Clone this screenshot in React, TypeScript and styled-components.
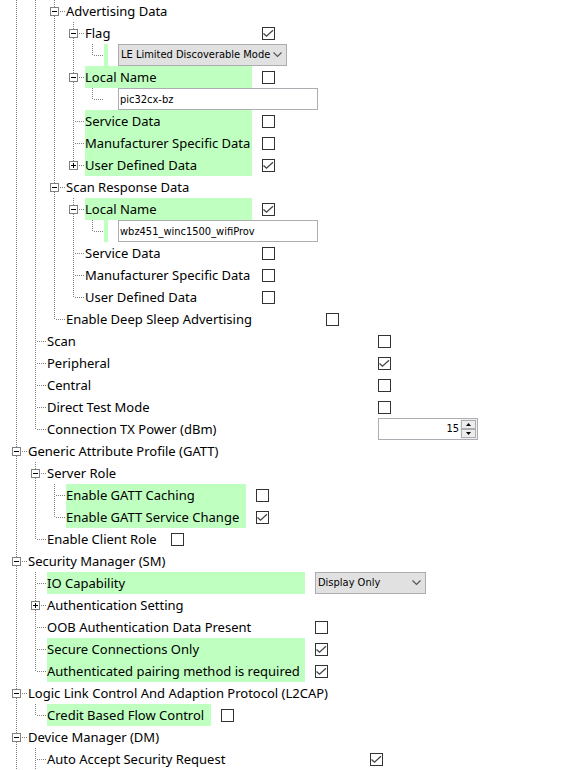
import React, { useState } from "react";
import styled, { createGlobalStyle, css } from "styled-components";

type Control =
  | { kind: "check"; checked?: boolean }
  | { kind: "select"; value: string; width: number }
  | { kind: "text"; value: string }
  | { kind: "number"; value: number };

interface TreeNode {
  label?: string;
  name?: string;
  changed?: boolean;
  control?: Control;
  collapsed?: boolean;
  more?: boolean;
  column?: number;
  children?: TreeNode[];
}

const on: Control = { kind: "check", checked: true };
const off: Control = { kind: "check" };

const profileTree: TreeNode[] = [
  {
    label: "Generic Attribute Profile (GATT)",
    column: 114,
    children: [
      {
        label: "Server Role",
        column: 180,
        children: [
          { label: "Enable GATT Caching", changed: true, control: off },
          { label: "Enable GATT Service Change", changed: true, control: on },
        ],
      },
      { label: "Enable Client Role", control: off },
    ],
  },
  {
    label: "Security Manager (SM)",
    column: 258,
    children: [
      { label: "IO Capability", changed: true, control: { kind: "select", value: "Display Only", width: 111 } },
      { label: "Authentication Setting", collapsed: true, children: [] },
      { label: "OOB Authentication Data Present", control: off },
      { label: "Secure Connections Only", changed: true, control: on },
      { label: "Authenticated pairing method is required", changed: true, control: on },
    ],
  },
  {
    label: "Logic Link Control And Adaption Protocol (L2CAP)",
    column: 164,
    children: [{ label: "Credit Based Flow Control", changed: true, control: off }],
  },
  {
    label: "Device Manager (DM)",
    more: true,
    column: 313,
    children: [{ label: "Auto Accept Security Request", more: true, control: on }],
  },
];

const gapTree: TreeNode[] = [
  {
    label: "Advertising Data",
    column: 167,
    children: [
      {
        label: "Flag",
        control: on,
        column: 4,
        children: [
          {
            name: "Discoverable mode",
            changed: true,
            control: { kind: "select", value: "LE Limited Discoverable Mode", width: 169 },
          },
        ],
      },
      {
        label: "Local Name",
        changed: true,
        control: off,
        column: 4,
        children: [{ name: "Advertised local name", control: { kind: "text", value: "pic32cx-bz" } }],
      },
      { label: "Service Data", changed: true, control: off },
      { label: "Manufacturer Specific Data", changed: true, control: off },
      { label: "User Defined Data", changed: true, control: on, collapsed: true, children: [] },
    ],
  },
  {
    label: "Scan Response Data",
    column: 167,
    children: [
      {
        label: "Local Name",
        changed: true,
        control: on,
        column: 4,
        children: [
          {
            name: "Scan response local name",
            changed: true,
            control: { kind: "text", value: "wbz451_winc1500_wifiProv" },
          },
        ],
      },
      { label: "Service Data", control: off },
      { label: "Manufacturer Specific Data", control: off },
      { label: "User Defined Data", control: off },
    ],
  },
  { label: "Enable Deep Sleep Advertising", control: off },
];

const roleTree: TreeNode[] = [
  { label: "Scan", control: off },
  { label: "Peripheral", control: on },
  { label: "Central", control: off },
  { label: "Direct Test Mode", control: off },
  { label: "Connection TX Power (dBm)", control: { kind: "number", value: 15 } },
];

const GlobalStyle = createGlobalStyle`
  * { box-sizing: border-box; }
  body { margin: 0; background: #fff; }
`;

const Page = styled.main`
  padding-left: 9px;
  overflow-x: hidden;
  color: #000;
  font: 13px/22px "Noto Sans", Verdana, sans-serif;
`;

const List = styled.ul`
  list-style: none;
  margin: 0;
  padding: 0;
`;

const Row = styled.div`
  display: flex;
  height: 22px;
  white-space: nowrap;
`;

type GuideShape = "line" | "blank" | "tee" | "end";

const vertical = "repeating-linear-gradient(to bottom, #808080 0 1px, transparent 1px 2px)";
const horizontal = "repeating-linear-gradient(to right, #808080 0 1px, transparent 1px 2px)";

const shapes = {
  blank: css``,
  line: css`
    background: ${vertical} 7px 0 / 1px 22px no-repeat;
  `,
  tee: css`
    background: ${vertical} 7px 0 / 1px 22px no-repeat, ${horizontal} 9px 11px / 9px 1px no-repeat;
  `,
  end: css`
    background: ${vertical} 7px 0 / 1px 12px no-repeat, ${horizontal} 9px 11px / 9px 1px no-repeat;
  `,
};

const Guide = styled.span<{ $shape: GuideShape }>`
  flex: none;
  width: 19px;
  height: 22px;
  padding: 7px 0 0 3px;
  ${(p) => shapes[p.$shape]}
`;

const Toggle = styled.button`
  display: block;
  width: 9px;
  height: 9px;
  padding: 0;
  border: 1px solid #808080;
  background: #fff;

  svg {
    display: block;
  }
`;

const Caption = styled.label<{ $changed?: boolean; $width?: number }>`
  flex: none;
  width: ${(p) => (p.$width ? `${p.$width}px` : "auto")};
  margin-right: 10px;
  background: ${(p) => (p.$changed ? "#bfffbf" : "transparent")};
`;

const TickBox = styled.span`
  display: grid;
  width: 13px;
  height: 13px;
  margin-top: 5px;

  > * {
    grid-area: 1 / 1;
  }
  svg {
    pointer-events: none;
    visibility: hidden;
  }
  input:checked + svg {
    visibility: visible;
  }
`;

const Tick = styled.input`
  appearance: none;
  width: 13px;
  height: 13px;
  margin: 0;
  border: 1px solid #333;
  background: #fff;
`;

const field = css`
  height: 22px;
  margin: 0;
  border: 1px solid #abadb3;
  border-radius: 0;
  color: #000;
  font: 11px/20px "DejaVu Sans Condensed", Tahoma, sans-serif;
`;

const SelectBox = styled.span<{ $width: number }>`
  display: grid;
  width: ${(p) => p.$width}px;
  align-items: center;

  > * {
    grid-area: 1 / 1;
  }
  svg {
    justify-self: end;
    margin-right: 5px;
    pointer-events: none;
  }
`;

const Select = styled.select`
  ${field}
  appearance: none;
  width: 100%;
  padding: 0 0 0 2px;
  background: #e1e1e1;
`;

const TextField = styled.input`
  ${field}
  width: 200px;
  padding: 0 1px;
  background: #fff;
`;

const Spinner = styled.span`
  ${field}
  display: flex;
  width: 100px;
  background: #fff;
`;

const SpinnerValue = styled.input`
  flex: 1;
  min-width: 0;
  padding: 0 1px 0 0;
  border: 0;
  background: transparent;
  font: inherit;
  text-align: right;
`;

const SpinnerArrows = styled.span`
  display: flex;
  flex-direction: column;
  width: 17px;
  padding: 1px;
  background: #f0f0f0;
`;

const Arrow = styled.button`
  display: flex;
  flex: 1;
  align-items: center;
  justify-content: center;
  padding: 0;
  border: 1px solid #abadb3;
  background: #ececec;
`;

function Field({ control, id, name }: { control: Control; id: string; name?: string }) {
  const [num, setNum] = useState(control.kind === "number" ? control.value : 0);
  if (control.kind === "check") {
    return (
      <TickBox>
        <Tick id={id} type="checkbox" defaultChecked={control.checked} />
        <svg width="13" height="13" viewBox="0 0 13 13" aria-hidden="true">
          <path d="M1.5 6.5 4.5 9.2 11 3.2" fill="none" stroke="#444" strokeWidth="1.3" />
        </svg>
      </TickBox>
    );
  }
  if (control.kind === "select") {
    return (
      <SelectBox $width={control.width}>
        <Select id={id} aria-label={name}>
          <option>{control.value}</option>
        </Select>
        <svg width="9" height="6" viewBox="0 0 9 6" aria-hidden="true">
          <path d="M.5.5 4.5 4.5 8.5.5" fill="none" stroke="#555" strokeWidth="1.2" />
        </svg>
      </SelectBox>
    );
  }
  if (control.kind === "text") {
    return <TextField id={id} aria-label={name} defaultValue={control.value} />;
  }
  return (
    <Spinner>
      <SpinnerValue id={id} inputMode="numeric" value={num} onChange={(e) => setNum(Number(e.target.value) || 0)} />
      <SpinnerArrows>
        <Arrow aria-label="Increase" onClick={() => setNum(num + 1)}>
          <svg width="5" height="3" viewBox="0 0 5 3"><path d="M0 3 2.5 0 5 3Z" /></svg>
        </Arrow>
        <Arrow aria-label="Decrease" onClick={() => setNum(num - 1)}>
          <svg width="5" height="3" viewBox="0 0 5 3"><path d="M0 0 2.5 3 5 0Z" /></svg>
        </Arrow>
      </SpinnerArrows>
    </Spinner>
  );
}

interface BranchProps {
  nodes: TreeNode[];
  guides: GuideShape[];
  column?: number;
  path: string;
}

function Branch({ nodes, guides, column, path }: BranchProps) {
  return (
    <List>
      {nodes.map((node, i) => (
        <Item
          key={i}
          node={node}
          guides={guides}
          column={column}
          id={`${path}-${i}`}
          last={i === nodes.length - 1 && !node.more}
        />
      ))}
    </List>
  );
}

interface ItemProps {
  node: TreeNode;
  guides: GuideShape[];
  column?: number;
  id: string;
  last: boolean;
}

function Item({ node, guides, column, id, last }: ItemProps) {
  const [open, setOpen] = useState(!node.collapsed);
  const labelled = Boolean(node.control && node.label);
  return (
    <li>
      <Row>
        {guides.map((shape, i) => (
          <Guide key={i} $shape={shape} />
        ))}
        <Guide $shape={last ? "end" : "tee"}>
          {node.children && (
            <Toggle aria-label={`Toggle ${node.label}`} aria-expanded={open} onClick={() => setOpen(!open)}>
              <svg width="7" height="7" viewBox="0 0 7 7">
                <path d={open ? "M1 3.5H6" : "M1 3.5H6M3.5 1V6"} stroke="#000" />
              </svg>
            </Toggle>
          )}
        </Guide>
        <Caption
          as={labelled ? "label" : "span"}
          htmlFor={labelled ? id : undefined}
          $changed={node.changed}
          $width={node.control ? column : undefined}
        >
          {node.label}
        </Caption>
        {node.control && <Field control={node.control} id={id} name={node.name} />}
      </Row>
      {open && node.children && (
        <Branch nodes={node.children} guides={[...guides, last ? "blank" : "line"]} column={node.column} path={id} />
      )}
    </li>
  );
}

export default function App() {
  return (
    <Page>
      <GlobalStyle />
      <Branch nodes={gapTree} guides={["line", "line"]} column={250} path="advertising" />
      <Branch nodes={roleTree} guides={["line"]} column={321} path="roles" />
      <Branch nodes={profileTree} guides={[]} path="profiles" />
    </Page>
  );
}
